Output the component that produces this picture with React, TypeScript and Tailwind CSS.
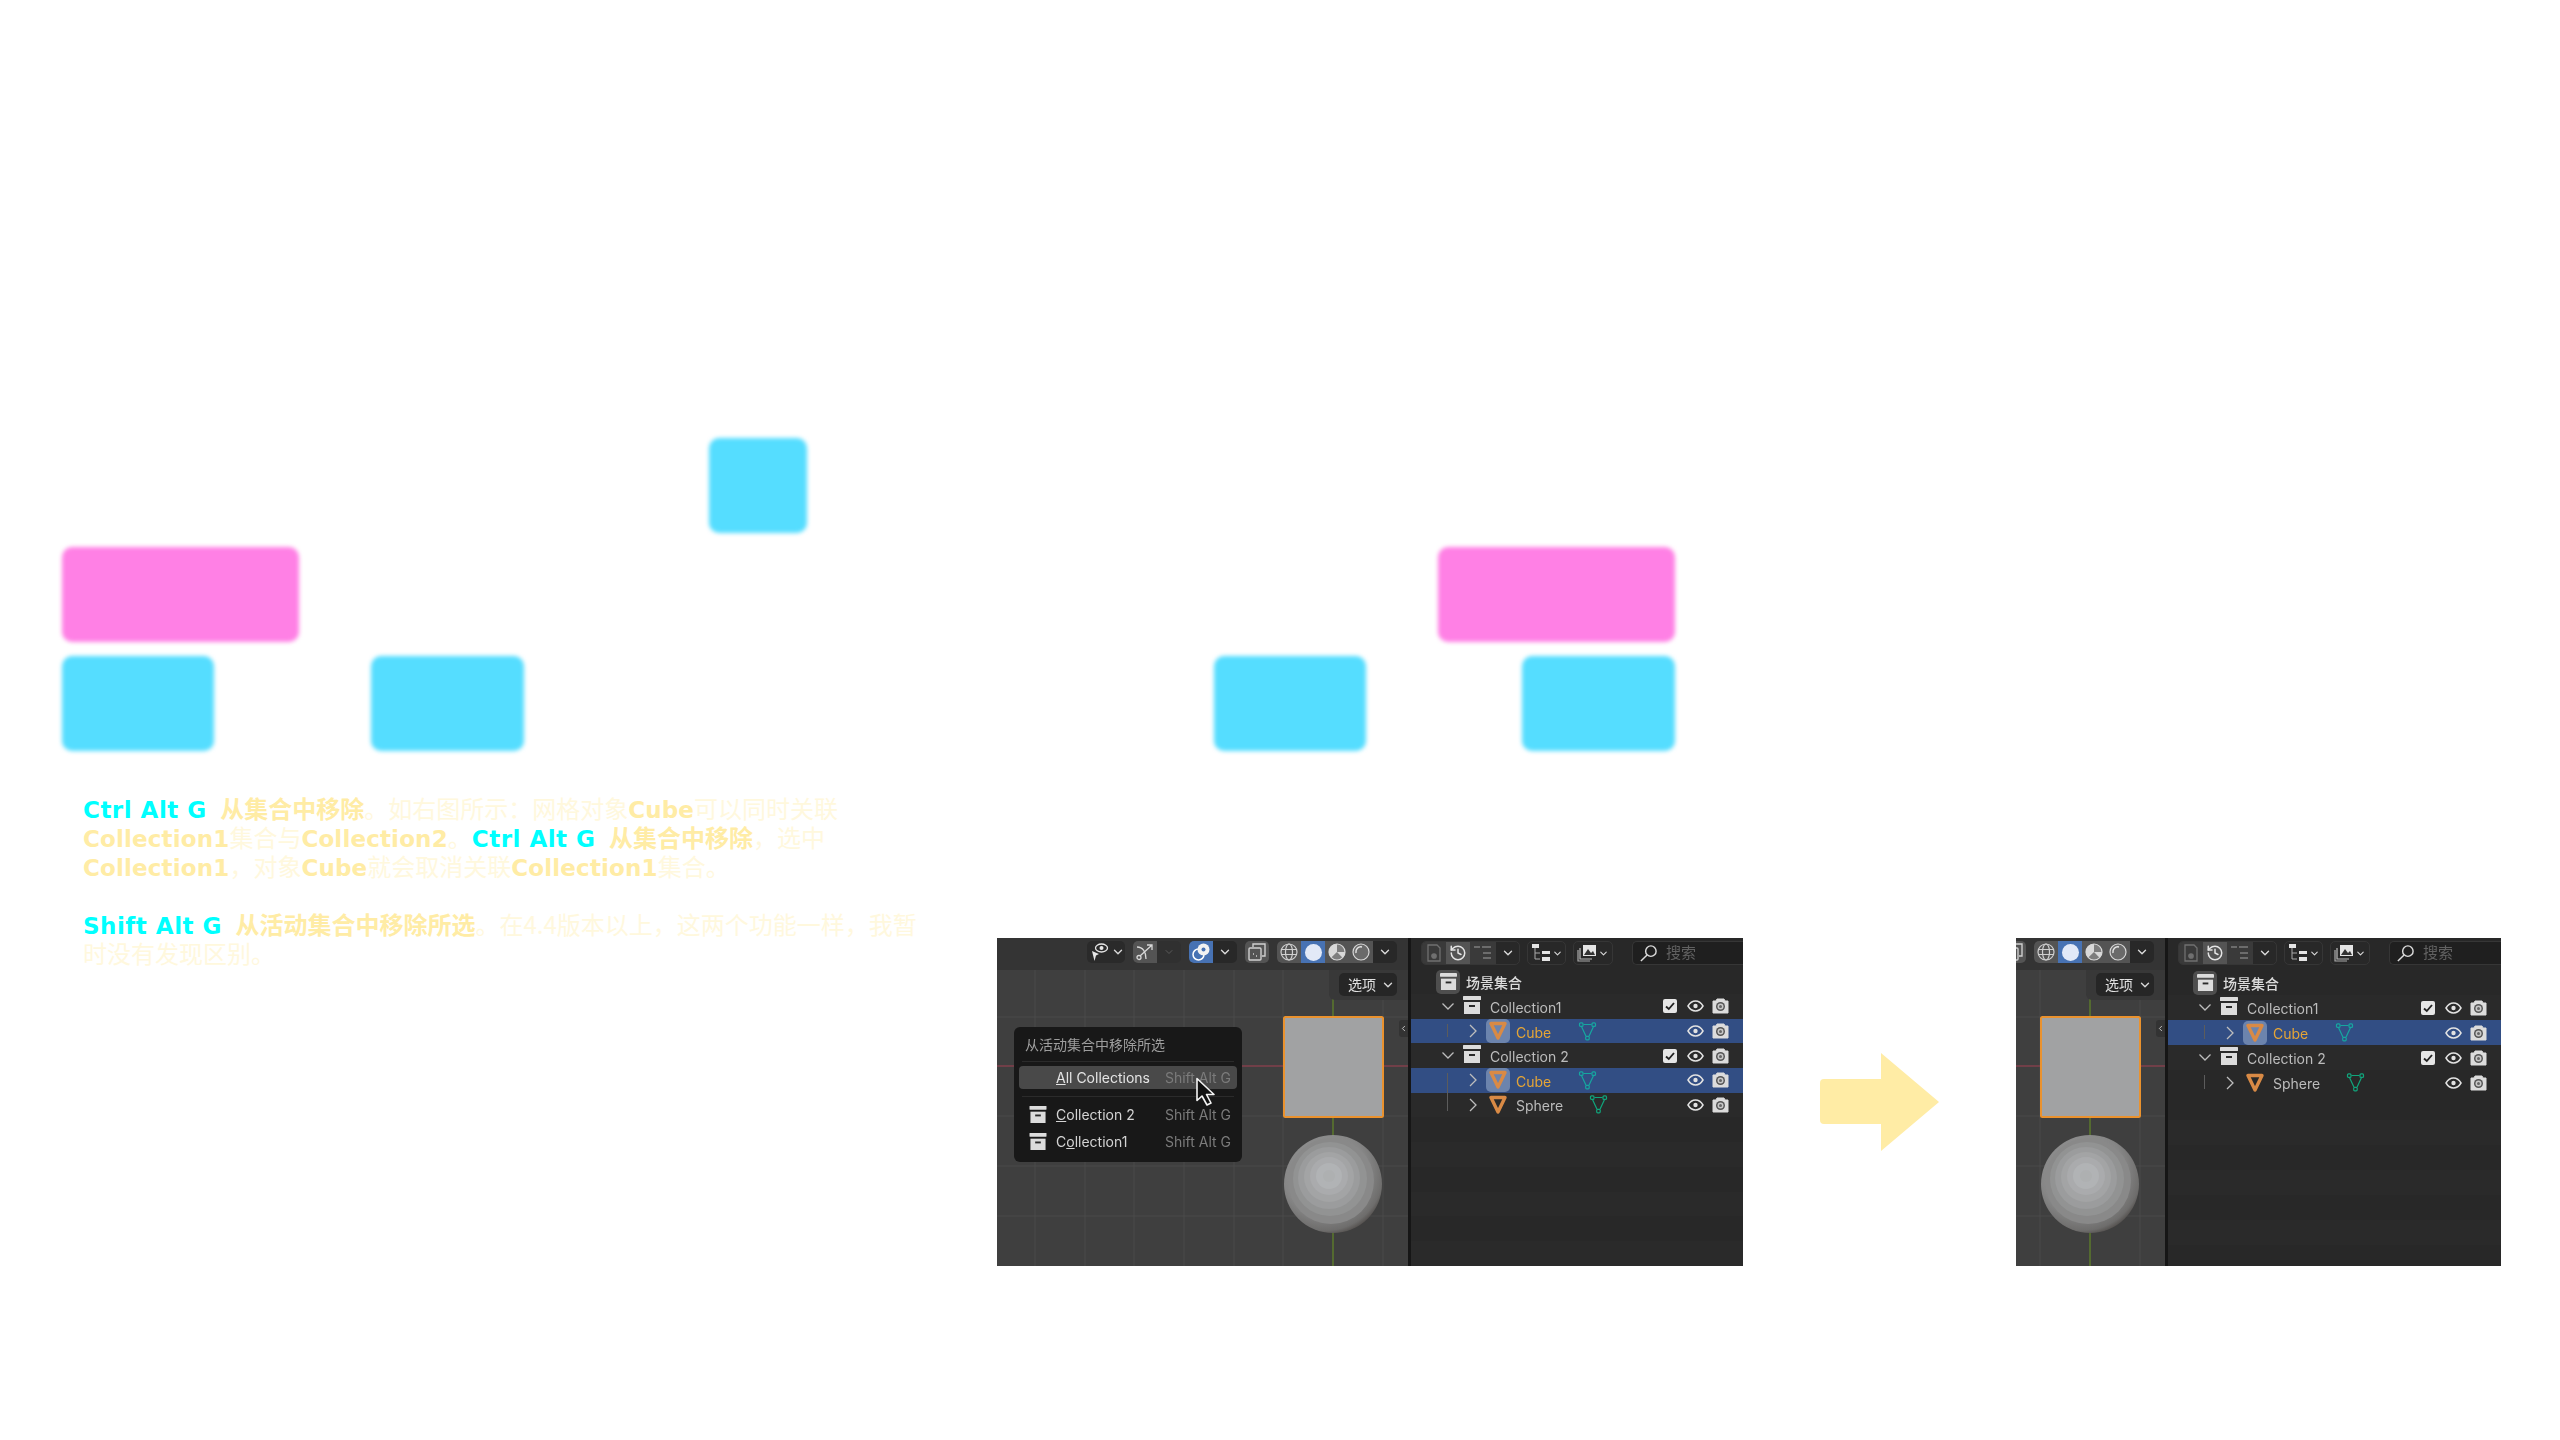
import { ChevronDown, ChevronLeft, History } from "lucide-react";
import type { ReactNode } from "react";

const cyanNode = "absolute rounded-[10px] bg-[#55ddff] blur-[2px]";
const pinkNode = "absolute rounded-[10px] bg-[#ff80e5] blur-[2px]";

function Key({ children }: { children: ReactNode }) {
  return <span className="pr-[5px] font-['DejaVu_Sans'] text-[23px] leading-none font-bold tracking-[0.5px] text-[#00ffff]">{children}</span>;
}

function Latin({ children }: { children: ReactNode }) {
  return <span className="font-['DejaVu_Sans'] text-[23px] leading-none font-bold tracking-[0.15px] text-[#ffeca5]">{children}</span>;
}

function Strong({ children }: { children: ReactNode }) {
  return <span className="font-bold text-[#ffeca5]">{children}</span>;
}

function CollectionIcon({ className = "" }: { className?: string }) {
  return (
    <svg viewBox="0 0 18 18" className={className}>
      <rect x="0" y="0" width="18" height="4" rx="0.5" fill="#dcdcdc" />
      <path d="M1 6h16v12H1z" fill="#dcdcdc" />
      <rect x="6" y="9" width="6" height="2" fill="#2a2a2a" />
    </svg>
  );
}

function ObjectIcon() {
  return (
    <svg viewBox="0 0 18 20" className="h-[20px] w-[18px]">
      <path d="M2 2.500h14L9 17z" fill="none" stroke="#d98a45" strokeWidth="3.400" strokeLinejoin="round" />
    </svg>
  );
}

function MeshIcon({ color }: { color: string }) {
  return (
    <svg viewBox="0 0 19 19" className="h-[19px] w-[19px]" fill="none" stroke={color} strokeWidth="1.200">
      <path d="M5.500 2.500h8M3.600 4.800l4.400 9.400M15.400 4.800l-4.400 9.400" />
      <rect x="1.500" y="0.900" width="3.500" height="3.500" rx="1" />
      <rect x="14" y="0.900" width="3.500" height="3.500" rx="1" />
      <rect x="7.700" y="14.300" width="3.500" height="3.500" rx="1" />
    </svg>
  );
}

function EyeIcon() {
  return (
    <svg viewBox="0 0 17 12" className="h-[12px] w-[17px]" fill="none">
      <path d="M1 6c2-3.400 4.500-5 7.500-5S14 2.600 16 6c-2 3.400-4.500 5-7.500 5S3 9.400 1 6z" stroke="#e2e2e2" strokeWidth="1.500" />
      <circle cx="8.500" cy="6" r="2.200" fill="#e2e2e2" />
    </svg>
  );
}

function CameraIcon() {
  return (
    <svg viewBox="0 0 17 16" className="h-[16px] w-[17px]">
      <path d="M1 3h3l1-2h7l1 2h3v12H1z" fill="#dcdcdc" stroke="#dcdcdc" strokeLinejoin="round" />
      <circle cx="8.500" cy="8.500" r="4.500" fill="#555" />
      <circle cx="8.500" cy="8.500" r="3" fill="#c8c8c8" />
      <circle cx="8.500" cy="8.500" r="1.500" fill="#666" />
    </svg>
  );
}

function CheckIcon() {
  return (
    <svg viewBox="0 0 14 14" className="h-[14px] w-[14px]">
      <rect width="14" height="14" rx="2" fill="#e6e6e6" />
      <path d="M3 7.500l2.800 2.500L11 4" fill="none" stroke="#222" strokeWidth="1.900" />
    </svg>
  );
}

function SmallChevron() {
  return <ChevronDown size={14} strokeWidth={2.400} className="text-[#d8d8d8]" />;
}

function VisibilityIcon() {
  return (
    <svg viewBox="0 0 20 20" className="h-[20px] w-[20px]">
      <path d="M3 9l7 3-3 1.500L5.500 19z" fill="#e6e6e6" />
      <ellipse cx="12.500" cy="6" rx="6" ry="4" fill="none" stroke="#e6e6e6" strokeWidth="1.300" />
      <circle cx="12.500" cy="6" r="2" fill="#e6e6e6" />
    </svg>
  );
}

function GizmoIcon() {
  return (
    <svg viewBox="0 0 20 20" className="h-[20px] w-[20px]" fill="none" stroke="#d8d8d8" strokeWidth="1.300">
      <path d="M2 5c6 0 9 5 9 12" />
      <path d="M5 14L17 3M12 3h5v5" />
      <circle cx="4" cy="15.500" r="2" />
    </svg>
  );
}

function OverlayIcon() {
  return (
    <svg viewBox="0 0 20 20" className="h-[20px] w-[20px]">
      <circle cx="7.500" cy="12.500" r="5.500" fill="none" stroke="#fff" strokeWidth="1.500" />
      <circle cx="12.500" cy="7.500" r="6" fill="#f2f2f2" />
      <circle cx="12.500" cy="7.500" r="2" fill="#4772b3" />
    </svg>
  );
}

function XrayIcon() {
  return (
    <svg viewBox="0 0 20 20" className="h-[20px] w-[20px]" fill="none" stroke="#cfcfcf" strokeWidth="1.400">
      <rect x="2" y="6" width="12" height="12" rx="1" />
      <path d="M6 5V2h12v12h-3" />
      <path d="M6 12h1M9 14h1" />
    </svg>
  );
}

function WireIcon() {
  return (
    <svg viewBox="0 0 18 18" className="h-[18px] w-[18px]" fill="none" stroke="#cfcfcf" strokeWidth="1.200">
      <circle cx="9" cy="9" r="8" />
      <ellipse cx="9" cy="9" rx="3.500" ry="8" />
      <path d="M1.500 6.500h15M1.500 11.500h15" />
    </svg>
  );
}

function MaterialIcon() {
  return (
    <svg viewBox="0 0 18 18" className="h-[18px] w-[18px]">
      <circle cx="9" cy="9" r="8" fill="#7d7d7d" stroke="#d8d8d8" strokeWidth="1.200" />
      <path d="M9 1a8 8 0 0 0-5.700 13.600L9 9z" fill="#d8d8d8" />
      <path d="M9 9h8a8 8 0 0 1-2.500 5.800z" fill="#d8d8d8" />
    </svg>
  );
}

function RenderedIcon() {
  return (
    <svg viewBox="0 0 18 18" className="h-[18px] w-[18px]" fill="none">
      <circle cx="9" cy="9" r="8" fill="#6a6a6a" stroke="#d8d8d8" strokeWidth="1.200" />
      <path d="M4 10a5 5 0 0 1 6-6" stroke="#e6e6e6" strokeWidth="1.500" />
    </svg>
  );
}

function Toolbar() {
  const seg = "flex h-full w-[24px] items-center justify-center";
  return (
    <div className="flex h-[32px] items-start justify-end bg-[#343434] pt-[3px] pr-[11px]">
      <div className="flex h-[22px] w-[38px] items-center rounded-[5px] bg-[#2a2a2a]">
        <div className={seg}><VisibilityIcon /></div>
        <SmallChevron />
      </div>
      <div className="ml-[8px] flex h-[22px] overflow-hidden rounded-[5px] bg-[#303030]">
        <div className={`${seg} bg-[#545454]`}><GizmoIcon /></div>
        <div className={seg}><ChevronDown size={12} strokeWidth={2} className="text-[#5a5a5a]" /></div>
      </div>
      <div className="ml-[8px] flex h-[22px] overflow-hidden rounded-[5px] bg-[#282828]">
        <div className={`${seg} bg-[#4772b3]`}><OverlayIcon /></div>
        <div className={seg}><SmallChevron /></div>
      </div>
      <div className="ml-[8px] flex h-[22px] w-[24px] items-center justify-center rounded-[5px] bg-[#545454]"><XrayIcon /></div>
      <div className="ml-[8px] flex h-[22px] overflow-hidden rounded-[5px] bg-[#282828]">
        <div className={`${seg} bg-[#545454]`}><WireIcon /></div>
        <div className={`${seg} bg-[#4772b3]`}><div className="h-[17px] w-[17px] rounded-full bg-[#e2e9f7]" /></div>
        <div className={`${seg} bg-[#545454]`}><MaterialIcon /></div>
        <div className={`${seg} bg-[#545454]`}><RenderedIcon /></div>
        <div className={seg}><SmallChevron /></div>
      </div>
    </div>
  );
}

function Scene() {
  const vertical = [38, 88, 137, 187, 237, 286, 386];
  const horizontal = [79, 178, 228, 278];
  // facet bands of the low-poly sphere, outer to inner
  const bands = [
    { r: 43, cx: 334, cy: 243, fill: "#898989" },
    { r: 37, cx: 333, cy: 241, fill: "#929393" },
    { r: 31, cx: 332, cy: 240, fill: "#9b9c9d" },
    { r: 25, cx: 332, cy: 239, fill: "#a3a4a5" },
    { r: 19, cx: 332, cy: 238, fill: "#aaabad" },
    { r: 13, cx: 332, cy: 238, fill: "#b1b3b5" },
    { r: 6, cx: 332, cy: 238, fill: "#aeb0b1" },
  ];
  return (
    <svg viewBox="0 0 411 328" className="absolute top-0 right-0 h-[328px] w-[411px]">
      <defs>
        <radialGradient id="ball" cx="0.42" cy="0.38" r="0.7">
          <stop offset="0" stopColor="#a0a1a2" />
          <stop offset="0.62" stopColor="#868686" />
          <stop offset="0.85" stopColor="#6e6d6c" />
          <stop offset="0.97" stopColor="#45403d" />
          <stop offset="1" stopColor="#383431" />
        </radialGradient>
      </defs>
      {vertical.map((x) => (
        <line key={x} x1={x} x2={x} y1="0" y2="328" stroke="#4b4b4b" />
      ))}
      {horizontal.map((y) => (
        <line key={y} x1="0" x2="411" y1={y} y2={y} stroke="#4b4b4b" />
      ))}
      <line x1="0" x2="411" y1="128" y2="128" stroke="#83404c" strokeWidth="1.300" />
      <line x1="336" x2="336" y1="0" y2="328" stroke="#5d7a2c" strokeWidth="1.500" />
      <rect x="287" y="79" width="99" height="100" rx="1.500" fill="#a1a2a3" stroke="#ea922e" strokeWidth="2" />
      <circle cx="336" cy="246" r="49" fill="url(#ball)" />
      {bands.map((b) => (
        <circle key={b.r} cx={b.cx} cy={b.cy} r={b.r} fill={b.fill} />
      ))}
    </svg>
  );
}

function MenuRow({ label, underline, active, icon }: { label: string; underline: number; active?: boolean; icon?: boolean }) {
  return (
    <div className={`mx-[5px] flex h-[23px] items-center rounded-[4px] pr-[6px] ${active ? "bg-[#494949] text-[#e4e4e4]" : "text-[#d4d4d4]"}`}>
      <div className="flex w-[37px] justify-end pr-[9px]">
        {icon && <CollectionIcon className="h-[17px] w-[18px]" />}
      </div>
      <span>
        {label.slice(0, underline)}
        <span className="underline">{label.charAt(underline)}</span>
        {label.slice(underline + 1)}
      </span>
      <span className="ml-auto text-[#7b7b7b]">Shift Alt G</span>
    </div>
  );
}

function Menu() {
  return (
    <div className="absolute top-[89px] left-[17px] w-[228px] rounded-[6px] bg-[#181818] pt-[8px] text-[14px] leading-[20px]">
      <div className="mx-[8px] h-[27px] border-b border-[#2b2b2b] pl-[3px] text-[#9e9e9e]">从活动集合中移除所选</div>
      <div className="mt-[4px]"><MenuRow label="All Collections" underline={0} active /></div>
      <div className="mx-[8px] mt-[7px] mb-[6px] h-px bg-[#2b2b2b]" />
      <MenuRow label="Collection 2" underline={0} icon />
      <div className="mt-[4px] pb-[9px]"><MenuRow label="Collection1" underline={1} icon /></div>
      <svg viewBox="0 0 22 32" className="absolute top-[50px] left-[181px] h-[32px] w-[22px]">
        <path d="M2 1.500v22l5-4.500 5 9 4-2-4.500-8.500H19z" fill="#111" stroke="#f4f4f4" strokeWidth="1.600" strokeLinejoin="round" />
      </svg>
    </div>
  );
}

function Viewport({ width, menu }: { width: string; menu?: boolean }) {
  return (
    <div className={`relative h-full shrink-0 overflow-hidden bg-[#3f3f3f] ${width}`}>
      <Scene />
      <div className="absolute top-0 right-0 w-[411px]">
        <Toolbar />
      </div>
      <div className="absolute top-[32px] right-0 h-[30px] w-[79px] rounded-bl-[6px] bg-[#383838]" />
      <div className="absolute top-[35px] right-[11px] flex h-[23px] w-[58px] items-center justify-between rounded-[5px] bg-[#262626] pr-[2px] pl-[9px] text-[14px] text-[#e0e0e0]">
        选项
        <SmallChevron />
      </div>
      <div className="absolute top-[82px] right-0 flex h-[17px] w-[9px] items-center justify-center rounded-l-[3px] bg-[#333]">
        <ChevronLeft size={11} strokeWidth={2.400} className="text-[#ccc]" />
      </div>
      {menu && <Menu />}
    </div>
  );
}

function OutlinerHeader() {
  const box = "flex h-[24px] items-center rounded-[5px] border border-[#363636]";
  return (
    <div className="flex h-[32px] items-start pt-[3px] pl-[10px]">
      <div className={`${box} w-[99px] overflow-hidden`}>
        <div className="flex h-full w-[24px] items-center justify-center bg-[#3a3a3a]">
          <svg viewBox="0 0 14 18" className="h-[18px] w-[14px]" fill="none" stroke="#707070" strokeWidth="1.300">
            <path d="M1 1h9l3 3v13H1z" />
            <circle cx="7" cy="12" r="2.200" fill="#707070" />
          </svg>
        </div>
        <div className="flex h-full w-[24px] items-center justify-center bg-[#545454]">
          <History size={18} strokeWidth={2} className="text-[#e4e4e4]" />
        </div>
        <div className="flex h-full w-[26px] items-center justify-center bg-[#3a3a3a]">
          <svg viewBox="0 0 18 16" className="h-[16px] w-[18px]" fill="#6c6c6c">
            <rect x="0" y="1" width="6" height="2" />
            <rect x="8" y="1" width="9" height="2" />
            <rect x="9" y="7" width="8" height="2" />
            <rect x="9" y="12" width="8" height="2" />
          </svg>
        </div>
        <div className="flex flex-1 justify-center"><SmallChevron /></div>
      </div>
      <div className={`${box} ml-[7px] w-[39px] justify-center gap-[1px]`}>
        <svg viewBox="0 0 20 18" className="h-[18px] w-[20px]">
          <rect x="1" y="0" width="7" height="4" fill="#e4e4e4" />
          <path d="M4 4v11h5M4 9h5" stroke="#aaa" fill="none" />
          <rect x="11" y="7" width="8" height="3" fill="#e4e4e4" />
          <rect x="11" y="13" width="8" height="4" fill="#e4e4e4" />
        </svg>
        <ChevronDown size={11} strokeWidth={2.400} className="text-[#d8d8d8]" />
      </div>
      <div className={`${box} ml-[7px] w-[40px] justify-center gap-[1px]`}>
        <svg viewBox="0 0 20 18" className="h-[18px] w-[20px]" fill="none">
          <path d="M1 6v11h12" stroke="#aaa" strokeWidth="1.200" />
          <path d="M3 4v11h12" stroke="#bbb" strokeWidth="1.200" />
          <rect x="6" y="1" width="13" height="11" fill="#e4e4e4" />
          <path d="M7 11l4-6 3 4 2-2 2 4z" fill="#333" />
        </svg>
        <ChevronDown size={11} strokeWidth={2.400} className="text-[#d8d8d8]" />
      </div>
      <div className="ml-[19px] flex h-[24px] flex-1 items-center gap-[8px] rounded-l-[5px] border border-r-0 border-[#363636] bg-[#1f1f1f] pl-[6px] text-[15px] text-[#616161]">
        <svg viewBox="0 0 20 20" className="h-[19px] w-[19px]" fill="none" stroke="#dcdcdc" strokeWidth="1.500">
          <circle cx="12.500" cy="7.500" r="5.500" />
          <path d="M8.500 11.500L2 18" />
        </svg>
        搜索
      </div>
    </div>
  );
}

function RowEnd({ check }: { check?: boolean }) {
  return (
    <div className="ml-auto flex items-center pr-[14px]">
      {check && <CheckIcon />}
      <div className="ml-[10px]"><EyeIcon /></div>
      <div className="ml-[8px]"><CameraIcon /></div>
    </div>
  );
}

function CollectionRow({ name, stripe }: { name: string; stripe?: boolean }) {
  return (
    <div className={`flex h-[25px] items-center pl-[31px] text-[14px] text-[#bcbcbc] ${stripe ? "bg-[#2a2a2a]" : ""}`}>
      <svg viewBox="0 0 12 7" className="h-[7px] w-[12px]" fill="none" stroke="#bdbdbd" strokeWidth="1.300">
        <path d="M0.500 0.500L6 6l5.500-5.500" />
      </svg>
      <CollectionIcon className="mb-[3px] ml-[9px] h-[18px] w-[18px]" />
      <span className="ml-[9px] pt-[2px]">{name}</span>
      <RowEnd check />
    </div>
  );
}

function ObjectRow({ name, line, selected, stripe }: { name: string; line: string; selected?: boolean; stripe?: boolean }) {
  const bg = selected ? "bg-[#324e84]" : stripe ? "bg-[#2a2a2a]" : "";
  return (
    <div className={`relative flex h-[25px] items-center pl-[58px] text-[14px] ${bg}`}>
      <div className={`absolute left-[36px] w-px bg-[#5c5c5c] ${line}`} />
      <svg viewBox="0 0 8 14" className="h-[14px] w-[8px] shrink-0" fill="none" stroke="#bdbdbd" strokeWidth="1.300">
        <path d="M1 1l6 6-6 6" />
      </svg>
      <div className={`ml-[9px] flex h-[24px] w-[24px] items-center justify-center rounded-[5px] ${selected ? "bg-[#6c84ad]" : ""}`}>
        <ObjectIcon />
      </div>
      <span className={`ml-[6px] pt-[2px] ${selected ? "w-[62px] text-[#e5a536]" : "w-[73px] text-[#bcbcbc]"}`}>{name}</span>
      <MeshIcon color={selected ? "#16a6a0" : "#10a57c"} />
      <RowEnd />
    </div>
  );
}

function Outliner({ children }: { children: ReactNode }) {
  return (
    <div className="flex h-full flex-1 flex-col border-l-[3px] border-[#161616] bg-[#282828]">
      <OutlinerHeader />
      <div className="flex h-[25px] items-center pl-[25px] text-[14px] font-medium text-[#dcdcdc]">
        <div className="flex h-[24px] w-[24px] items-center justify-center rounded-[5px] bg-[#4e4e4e]">
          <CollectionIcon className="h-[17px] w-[17px]" />
        </div>
        <span className="ml-[6px] pt-[1px]">场景集合</span>
      </div>
      {children}
      <div className="mt-[25px] h-[25px] bg-[#2a2a2a]" />
      <div className="mt-[25px] h-[25px] bg-[#2a2a2a]" />
      <div className="mt-[25px] h-[25px] bg-[#2a2a2a]" />
    </div>
  );
}

function Shot({ className, children }: { className: string; children: ReactNode }) {
  return (
    <div className={`h-[328px] shrink-0 overflow-hidden ${className}`}>
      <div className="flex h-full font-['Inter','Noto_Sans_CJK_SC',sans-serif] blur-[0.5px]">{children}</div>
    </div>
  );
}

export default function App() {
  return (
    <div className="h-[1440px] w-[2560px] overflow-hidden bg-white font-['Noto_Sans_CJK_SC',sans-serif]">
      {/* blurred blocks, free-standing diagram */}
      <div className="relative h-[780px]">
        <div className={`${cyanNode} top-[438px] left-[709px] h-[95px] w-[98px]`} />
        <div className={`${pinkNode} top-[547px] left-[62px] h-[95px] w-[237px]`} />
        <div className={`${cyanNode} top-[656px] left-[62px] h-[95px] w-[152px]`} />
        <div className={`${cyanNode} top-[656px] left-[371px] h-[95px] w-[153px]`} />
        <div className={`${pinkNode} top-[547px] left-[1438px] h-[95px] w-[237px]`} />
        <div className={`${cyanNode} top-[656px] left-[1214px] h-[95px] w-[152px]`} />
        <div className={`${cyanNode} top-[656px] left-[1522px] h-[95px] w-[153px]`} />
      </div>

      <div className="flex">
        <div className="w-[997px] shrink-0 pt-[13px] pl-[83px] text-[24px] leading-[29px] text-[#fff8dd]">
          <p>
            <Key>Ctrl Alt G </Key><Strong>从集合中移除</Strong>。如右图所示：网格对象<Latin>Cube</Latin>可以同时关联
            <br />
            <Latin>Collection1</Latin>集合与<Latin>Collection2</Latin>。<Key>Ctrl Alt G </Key><Strong>从集合中移除</Strong>，选中
            <br />
            <Latin>Collection1</Latin>，对象<Latin>Cube</Latin>就会取消关联<Latin>Collection1</Latin>集合。
          </p>
          <p className="mt-[29px]">
            <Key>Shift Alt G </Key><Strong>从活动集合中移除所选</Strong>。在4.4版本以上，这两个功能一样，我暂
            <br />
            时没有发现区别。
          </p>
        </div>

        <div className="flex items-center pt-[158px]">
          <Shot className="w-[746px]">
            <Viewport width="w-[411px]" menu />
            <Outliner>
              <CollectionRow name="Collection1" stripe />
              <ObjectRow name="Cube" selected line="top-[5px] bottom-[6px]" />
              <CollectionRow name="Collection 2" stripe />
              <ObjectRow name="Cube" selected line="top-[5px] bottom-0" />
              <ObjectRow name="Sphere" stripe line="top-0 bottom-[6px]" />
            </Outliner>
          </Shot>

          <svg viewBox="0 0 119 98" className="mx-[77px] h-[98px] w-[119px] shrink-0">
            <path d="M4 26h57V0l58 49-58 49V71H4a4 4 0 0 1-4-4V30a4 4 0 0 1 4-4z" fill="#ffeca5" />
          </svg>

          <Shot className="w-[485px]">
            <Viewport width="w-[149px]" />
            <Outliner>
              <CollectionRow name="Collection1" stripe />
              <ObjectRow name="Cube" selected line="top-[5px] bottom-[6px]" />
              <CollectionRow name="Collection 2" stripe />
              <ObjectRow name="Sphere" line="top-[5px] bottom-[6px]" />
            </Outliner>
          </Shot>
        </div>
      </div>
    </div>
  );
}
